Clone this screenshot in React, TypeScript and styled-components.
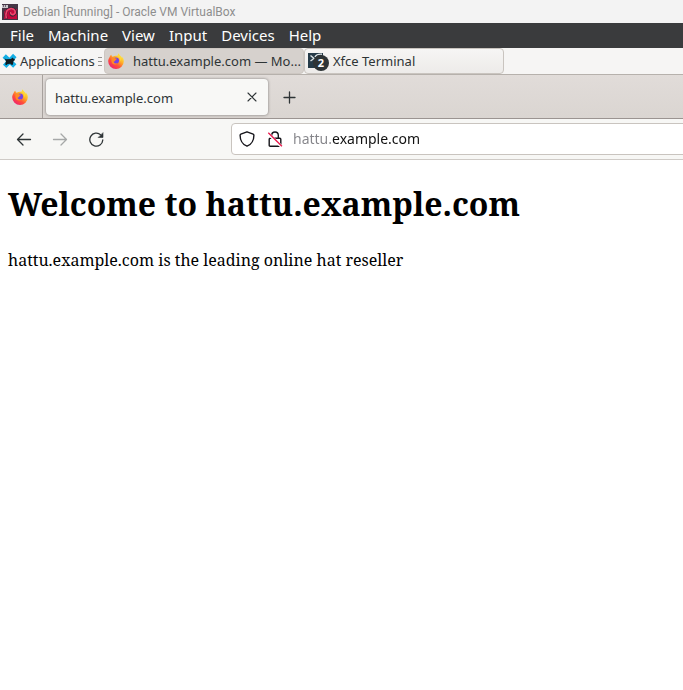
import React, { useState } from "react";
import styled, { createGlobalStyle } from "styled-components";

const Global = createGlobalStyle`
  *, *::before, *::after { box-sizing: border-box; }
  body { margin: 0; background: #fff; overflow-x: hidden; font-family: "Noto Sans", "Open Sans", sans-serif; }
  button, input { font: inherit; border: 0; margin: 0; padding: 0; background: none; }
  svg { display: block; flex: none; }
`;

const TitleBar = styled.header`
  display: flex;
  align-items: center;
  gap: 5px;
  height: 23px;
  padding: 0 2px;
  background: #f3f3f3;
  color: #8e8e8e;
  font-family: Roboto, "Noto Sans", sans-serif;
  font-size: 12px;
  line-height: 22px;
  white-space: nowrap;
`;

const MenuBar = styled.nav`
  display: flex;
  gap: 14px;
  height: 25px;
  padding: 0 10px 1px;
  background: #3a3b3d;
`;

const MenuItem = styled.button`
  color: #fff;
  font-size: 15px;
  line-height: 24px;
  white-space: nowrap;
`;

const Panel = styled.div`
  display: flex;
  height: 27px;
  background: #f6f5f4;
  border-bottom: 1px solid #b6b1ac;
  color: #2e3436;
  font-size: 13px;
`;

const AppsButton = styled.button`
  display: flex;
  align-items: center;
  gap: 3px;
  width: 94px;
  padding-left: 2px;
  color: inherit;
  line-height: 24px;
`;

const Grip = styled.span`
  width: 4px;
  height: 9px;
  margin: 9px 2px 0 4px;
  border: solid #96928e;
  border-width: 1px 0;
  background: linear-gradient(#96928e, #96928e) 0 3px / 4px 1px no-repeat;
`;

const Task = styled.button<{ $active?: boolean }>`
  display: flex;
  align-items: center;
  gap: ${(p) => (p.$active ? 9 : 4)}px;
  width: 200px;
  height: 26px;
  padding: 0 0 0 3px;
  border: 1px solid ${(p) => (p.$active ? "#cdc7c2" : "#c9c4bf")};
  border-radius: 4px;
  background: ${(p) => (p.$active ? "#d6d1cd" : "linear-gradient(#f6f5f4, #edebe9)")};
  color: inherit;
  line-height: 24px;
  white-space: nowrap;
`;

const TabStrip = styled.div`
  display: flex;
  align-items: center;
  height: 44px;
  background: linear-gradient(#e1dcd9, #dad5d1);
  border-bottom: 1px solid #9b9491;
`;

const PinnedTab = styled.button`
  display: flex;
  align-items: center;
  justify-content: center;
  width: 43px;
  height: 43px;
  padding-right: 3px;
  border-right: 1px solid #a7a19d;
`;

const Tab = styled.div`
  display: flex;
  align-items: center;
  justify-content: space-between;
  width: 222px;
  height: 36px;
  margin-left: 3px;
  padding: 0 10px 0 9px;
  border-radius: 4px;
  background: #f8f8f6;
  box-shadow: 0 0 3px rgba(0, 0, 0, 0.45);
  color: #2e3436;
  font-size: 13px;
`;

const TabTitle = styled.span`
  padding-top: 2px;
`;

const IconButton = styled.button<{ $faded?: boolean }>`
  display: flex;
  align-items: center;
  justify-content: center;
  color: #2e3436;
  opacity: ${(p) => (p.$faded ? 0.4 : 1)};
`;

const NewTab = styled(IconButton)`
  margin-left: 15px;
`;

const NavBar = styled.div`
  display: flex;
  align-items: center;
  height: 41px;
  padding-left: 16px;
  background: #f7f7f5;
  border-bottom: 1px solid #cfcbc7;
`;

const NavButtons = styled.div`
  display: flex;
  gap: 20px;
  width: 215px;
  flex: none;
`;

const AddressBar = styled.label`
  display: flex;
  align-items: center;
  gap: 12px;
  flex: 1;
  height: 32px;
  margin-right: -6px;
  padding-left: 7px;
  border: 1px solid #c9c4bf;
  border-radius: 4px;
  background: #fff;
`;

const Address = styled.input`
  flex: 1;
  min-width: 0;
  height: 28px;
  margin-left: -2px;
  padding-bottom: 2px;
  outline: 0;
  color: transparent;
  caret-color: #111;
  font-size: 14px;
  background: linear-gradient(90deg, #85858a 39px, #111 39px);
  background-clip: text;
  -webkit-background-clip: text;
`;

const Page = styled.main`
  padding: 22px 8px;
  background: #fff;
  color: #000;
  font-family: "Noto Serif", "Droid Serif", "DejaVu Serif Condensed", "DejaVu Serif", serif;
`;

const Heading = styled.h1`
  margin: 0;
  font-size: 32px;
  line-height: 44px;
`;

const Paragraph = styled.p`
  margin: 23px 0 0;
  font-size: 16px;
  line-height: 22px;
`;

const Firefox = () => (
  <svg width="16" height="16" viewBox="0 0 16 16" aria-hidden="true">
    <defs>
      <linearGradient id="flame" x1="0.85" y1="0.1" x2="0.2" y2="0.95">
        <stop offset="0" stopColor="#fff044" />
        <stop offset="0.35" stopColor="#ffb027" />
        <stop offset="0.65" stopColor="#ff5139" />
        <stop offset="1" stopColor="#f0206f" />
      </linearGradient>
    </defs>
    <path d="M10.400.200c-.5 1.300.1 2.200-.7 2.800C8.300 2.400 6 2.600 4.800 3.700 4 3.500 3.400 2.500 3.300 1.700 2.200 2.500 1.800 3.400 1.500 4.300.700 5.500.200 6.800.200 8.300a7.800 7.700 0 0 0 15.600 0c0-2-.8-3.800-1.800-4.800.2.700.3 1.200.2 1.700C13.300 2.900 11.400 2.200 10.400.200z" fill="url(#flame)" />
    <circle cx="8" cy="7.600" r="3.100" fill="#7542e5" />
    <path d="M3.800 5.100C5.300 4.400 7 4.700 7.700 5.600l1.400.2c-.1.800-1.500 1-1.700 1.500-.2 1.200-1.300.9-1.700 1.500.1 1.900 2.600 2.200 3.900 1.200-1 2.300-5.300 2.200-6-.9-.3-1.500-.2-3 .2-4z" fill="#ff8a25" />
    <path d="M9.200 3.100c2.500.8 3.600 3 3 5.400 1-.9 1-2.700.4-4.200L10.400.700z" fill="#ffd83a" />
  </svg>
);

const DebianVm = () => (
  <svg width="16" height="16" viewBox="0 0 16 16" aria-hidden="true">
    <path fill="#453645" d="M0 0h16v16H0z" />
    <path fill="#c5083e" d="M4 5h11v10H2V8z" />
    <path d="M4.500 15C2.500 9 5 4.500 9 4.500c5-.5 6 5 3 6.500-3 1.500-4.500-1-3-3" fill="none" stroke="#342636" strokeWidth="2.400" />
    <path d="M4.300 14.500C3 8 5 5 9 4.600c4-.2 5.500 4 2.800 5.800-2 .9-3.800-.7-2.900-2.400" fill="none" stroke="#f5426c" strokeWidth="1.700" />
    <path fill="#c8c4c8" d="M0 1h6v3H0z" />
    <path d="M1.500 1v2M3.500 1v2" stroke="#6e6270" />
  </svg>
);

const Xfce = () => (
  <svg width="15" height="16" viewBox="0 0 15 16" aria-hidden="true">
    <path d="M2.200 3 12.800 13M12.800 2.500 2.700 13.300" stroke="#13aee5" strokeWidth="4.800" />
    <path d="M2.500 5.200 4 6.200 9.200 6l1-1.600 1 1.200 1.500.4.100 1.200-1.300.7-.6 3.800H9.200l-.8-1-2.600.3-1.700 1.300-.9-1 .8-3z" fill="#111b20" />
  </svg>
);

const Terminal = () => (
  <svg width="21" height="19" viewBox="0 0 21 19" aria-hidden="true">
    <path d="M0 1h15v15H0z" fill="#263b49" />
    <path d="m2.500 3.500 3.500 3L2.500 9M14 2.200C11 2 8 3 7 5" fill="none" stroke="#dce2e4" strokeWidth="1.400" />
    <circle cx="13" cy="11" r="8" fill="#2e3436" />
    <text x="13" y="15" textAnchor="middle" fill="#fff" fontFamily="Noto Sans, sans-serif" fontSize="11" fontWeight="700">2</text>
  </svg>
);

const line = { fill: "none", stroke: "currentColor", strokeWidth: 1.3, strokeLinecap: "round" as const, strokeLinejoin: "round" as const };

const Back = () => (
  <svg width="16" height="16" viewBox="0 0 16 16" {...line}><path d="M14.500 8.500H1.500M7 3 1.500 8.500 7 14" /></svg>
);
const Forward = () => (
  <svg width="16" height="16" viewBox="0 0 16 16" {...line}><path d="M1.500 8.500h13M9 3l5.500 5.500L9 14" /></svg>
);
const Reload = () => (
  <svg width="16" height="16" viewBox="0 0 16 16" {...line}>
    <path d="M14.800 9a6.500 6.500 0 1 1-2-5.100l1 1" />
    <path d="M15 2v4.500h-4.500z" fill="currentColor" strokeWidth="0.600" />
  </svg>
);
const Close = () => (
  <svg width="12" height="12" viewBox="0 0 12 12" {...line} strokeWidth="1.100"><path d="m2 2 8 8M10 2l-8 8" /></svg>
);
const Plus = () => (
  <svg width="14" height="14" viewBox="0 0 14 14" {...line}><path d="M6.500 2v11M1 7.500h11" /></svg>
);
const Shield = () => (
  <svg width="16" height="16" viewBox="0 0 16 16" fill="none" stroke="#15141a" strokeWidth="1.400" strokeLinejoin="round" aria-hidden="true">
    <path d="M8 .8 14.200 3.200c.5.200.7.500.7 1C14.900 8.500 12.800 13.500 8 15.200 3.200 13.500 1.100 8.500 1.100 4.200c0-.5.2-.8.700-1z" />
  </svg>
);
const InsecureLock = () => (
  <svg width="16" height="16" viewBox="0 0 16 16" fill="none" stroke="#15141a" strokeWidth="1.400" aria-hidden="true">
    <path d="M4.700 7V4.300a3.300 3.300 0 0 1 6.600 0V7M3.200 7.300h9.600c.6 0 1 .4 1 1v5.900c0 .6-.4 1-1 1H3.200c-.6 0-1-.4-1-1V8.300c0-.6.4-1 1-1z" />
    <path d="m.8 2.200 13.700 13.300" stroke="#fff" strokeWidth="3" />
    <path d="m1.300 1.800 13.600 13.400" stroke="#e9154a" strokeWidth="1.300" />
  </svg>
);

const menus = ["File", "Machine", "View", "Input", "Devices", "Help"];

export default function App() {
  const [address, setAddress] = useState("hattu.example.com");
  return (
    <>
      <Global />
      <TitleBar><DebianVm />Debian [Running] - Oracle VM VirtualBox</TitleBar>
      <MenuBar>{menus.map((m) => <MenuItem key={m}>{m}</MenuItem>)}</MenuBar>
      <Panel>
        <AppsButton><Xfce />Applications</AppsButton>
        <Grip />
        <Task $active><Firefox /><span>hattu.example.com — Mo...</span></Task>
        <Task><Terminal /><span>Xfce Terminal</span></Task>
      </Panel>
      <TabStrip>
        <PinnedTab aria-label="Firefox"><Firefox /></PinnedTab>
        <Tab>
          <TabTitle>hattu.example.com</TabTitle>
          <IconButton aria-label="Close tab"><Close /></IconButton>
        </Tab>
        <NewTab aria-label="New tab"><Plus /></NewTab>
      </TabStrip>
      <NavBar>
        <NavButtons>
          <IconButton aria-label="Back"><Back /></IconButton>
          <IconButton aria-label="Forward" $faded><Forward /></IconButton>
          <IconButton aria-label="Reload"><Reload /></IconButton>
        </NavButtons>
        <AddressBar>
          <Shield />
          <InsecureLock />
          <Address aria-label="Address" value={address} onChange={(e) => setAddress(e.target.value)} />
        </AddressBar>
      </NavBar>
      <Page>
        <Heading>Welcome to hattu.example.com</Heading>
        <Paragraph>hattu.example.com is the leading online hat reseller</Paragraph>
      </Page>
    </>
  );
}
